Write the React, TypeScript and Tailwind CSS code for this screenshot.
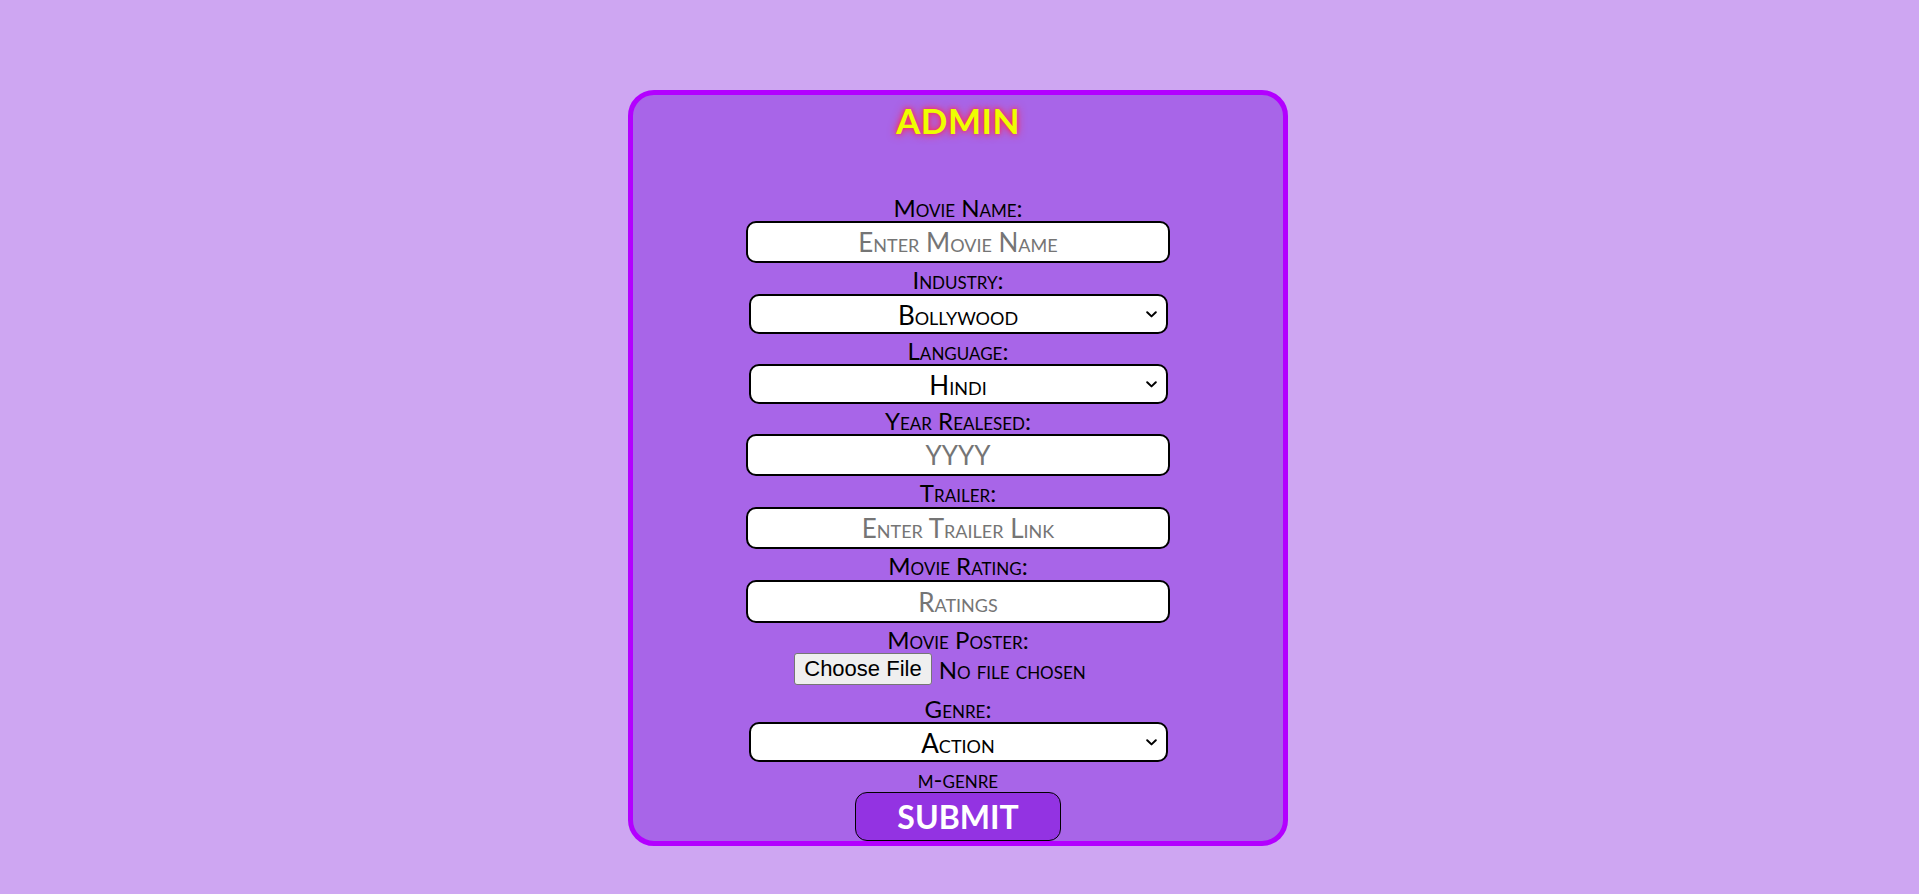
import React from "react";

const font = "font-['Lato','Open_Sans',sans-serif] [font-variant:small-caps]";

function Label({ text, className = "" }: { text: string; className?: string }) {
  return (
    <div className={`h-[30px] pt-[6px] leading-[22px] text-[24px] text-black text-center ${className}`}>
      {text}
    </div>
  );
}

function TextInput({ placeholder, h = "h-[42px]" }: { placeholder: string; h?: string }) {
  return (
    <input
      type="text"
      placeholder={placeholder}
      className={`${h} w-[424px] bg-white border-2 border-black rounded-[10px] text-center text-[26px] text-black placeholder:text-[#757575] outline-none [font-variant:small-caps]`}
    />
  );
}

function Select({ options }: { options: string[] }) {
  return (
    <div className="relative w-[419px] h-[40px]">
      <select className="appearance-none w-full h-full bg-white border-2 border-black rounded-[10px] text-center [text-align-last:center] text-[26px] text-black outline-none [font-variant:small-caps]">
        {options.map((o) => (
          <option key={o}>{o}</option>
        ))}
      </select>
      <svg
        className="absolute right-[11px] top-[17px] pointer-events-none"
        width="11"
        height="7"
        viewBox="0 0 11 7"
        fill="none"
      >
        <path d="M1.2 1.2 L5.5 5.4 L9.8 1.2" stroke="black" strokeWidth="2" strokeLinecap="round" strokeLinejoin="round" />
      </svg>
    </div>
  );
}

export default function App() {
  return (
    <div className={`min-h-screen w-full bg-[#cea6f2] flex justify-center pr-[3px] ${font}`}>
      <div className="mt-[90px] mb-[49px] w-[660px] border-[5px] border-[#b300ff] rounded-[26px] bg-[#a865e8] flex flex-col items-center">
        <div className="h-[96px] w-full flex justify-center">
          <h1 className="mt-[5px] h-[40px] leading-[40px] text-[35px] font-bold text-[#eeff00] [font-variant:normal] [text-shadow:0_0_10px_#ff2a55,0_0_4px_#ff2a55] tracking-[0.5px]">
            ADMIN
          </h1>
        </div>

        <Label text="Movie Name:" />
        <TextInput placeholder="Enter Movie Name" />

        <Label text="Industry:" className="h-[31px]" />
        <Select options={["Bollywood", "Hollywood", "Tollywood"]} />

        <Label text="Language:" />
        <Select options={["Hindi", "English", "Telugu", "Tamil"]} />

        <Label text="Year Realesed:" />
        <TextInput placeholder="YYYY" />

        <Label text="Trailer:" className="h-[31px]" />
        <TextInput placeholder="Enter Trailer Link" />

        <Label text="Movie Rating:" className="h-[31px]" />
        <TextInput placeholder="Ratings" h="h-[43px]" />

        <Label text="Movie Poster:" />
        <div className="h-[32px] mr-[36px] flex items-center gap-[7px]">
          <button
            type="button"
            className="h-[32px] px-[9px] bg-[#efefef] border border-[#767676] rounded-[3px] font-['Liberation_Sans','Arial',sans-serif] [font-variant:normal] text-[22px] leading-[30px] text-black"
          >
            Choose File
          </button>
          <span className="text-[24px] text-black leading-[22px] pt-[2px]">No file chosen</span>
        </div>

        <Label text="Genre:" className="mt-[7px]" />
        <Select options={["Action", "Comedy", "Drama", "Horror"]} />

        <Label text="m-genre" className="h-[29px]" />
        <button
          type="button"
          className="w-[206px] h-[49px] bg-[#9333e2] border border-black rounded-[12px] text-white text-[32px] font-bold leading-[47px] [font-variant:normal]"
        >
          SUBMIT
        </button>
      </div>
    </div>
  );
}
